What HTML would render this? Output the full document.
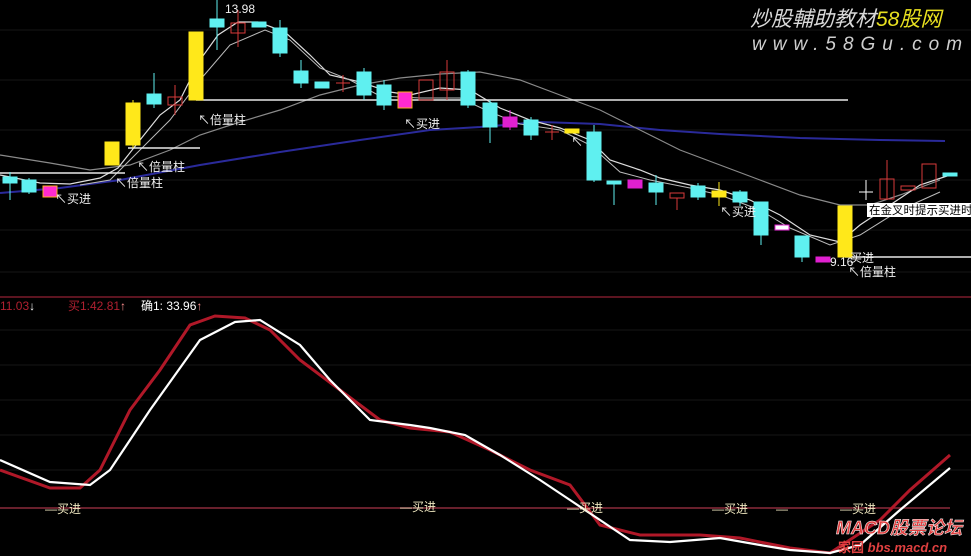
<!DOCTYPE html>
<html><head><meta charset="utf-8"><style>
html,body{margin:0;padding:0;background:#000;width:971px;height:556px;overflow:hidden}
svg{display:block}
text{font-family:"Liberation Sans","Noto Sans CJK SC",sans-serif}
</style></head><body>
<svg width="971" height="556" viewBox="0 0 971 556" xmlns="http://www.w3.org/2000/svg">
<rect width="971" height="556" fill="#000"/>
<g stroke="#0b0b0b" stroke-width="2">
<line x1="0" y1="30" x2="971" y2="30"/><line x1="0" y1="80" x2="971" y2="80"/><line x1="0" y1="130" x2="971" y2="130"/><line x1="0" y1="180" x2="971" y2="180"/><line x1="0" y1="230" x2="971" y2="230"/><line x1="0" y1="272" x2="971" y2="272"/>
<line x1="0" y1="330" x2="971" y2="330"/><line x1="0" y1="365" x2="971" y2="365"/><line x1="0" y1="400" x2="971" y2="400"/><line x1="0" y1="435" x2="971" y2="435"/><line x1="0" y1="470" x2="971" y2="470"/>
</g>
<!-- watermark -->
<text x="750" y="26" font-size="21" font-style="italic" fill="#d8d8d8">炒股輔助教材<tspan fill="#e8e020">58股网</tspan></text>
<text x="752" y="50" font-size="19" font-style="italic" fill="#cfcfcf" letter-spacing="7">www.58Gu.com</text>
<!-- MAs -->
<polyline fill="none" stroke="#2a2a9a" stroke-width="2" points="0,193 60,188 120,180 200,165 280,152 360,140 430,130 480,127 540,122 600,124 660,130 720,134 800,138 880,140 945,141"/>
<polyline fill="none" stroke="#8a8a8a" stroke-width="1.2" points="0,155 50,163 90,170 130,165 170,150 200,135 240,122 280,110 320,95 360,85 400,78 440,74 480,72 520,80 560,95 600,110 640,130 680,150 720,165 760,180 800,195 840,205 870,205 900,195 940,180"/>
<polyline fill="none" stroke="#ddd" stroke-width="1.2" points="0,175 40,183 70,184 100,178 118,168 140,140 160,115 180,100 200,60 218,35 238,22 258,22 285,32 310,55 330,75 360,82 390,92 410,95 440,88 470,90 500,108 530,120 560,128 590,140 610,160 640,170 660,178 690,185 720,190 750,200 780,215 810,235 840,242 860,225 890,205 920,185 950,175"/>
<polyline fill="none" stroke="#bbb" stroke-width="1" points="80,185 110,180 140,150 170,120 200,80 230,45 265,30 290,40 320,68 350,80 380,96 420,98 460,98 490,112 520,124 560,130 590,145 620,172 650,180 690,188 720,195 760,210 790,228 830,245 860,235 900,210 940,192"/>
<!-- horizontal level lines -->
<g stroke="#e8e8e8" stroke-width="1.5">
<line x1="196" y1="100" x2="848" y2="100"/><line x1="128" y1="148" x2="200" y2="148"/><line x1="0" y1="173" x2="125" y2="173"/><line x1="845" y1="257" x2="971" y2="257"/>
</g>
<!-- candles -->
<g stroke-width="1">
<g fill="#5ff0f0" stroke="#5ff0f0">
<line x1="10" y1="172" x2="10" y2="200"/><rect x="3" y="177" width="14" height="6"/>
<line x1="29" y1="178" x2="29" y2="194"/><rect x="22" y="180" width="14" height="12"/>
<line x1="154" y1="73" x2="154" y2="108"/><rect x="147" y="94" width="14" height="10"/>
<line x1="217" y1="0" x2="217" y2="50"/><rect x="210" y="19" width="14" height="8"/>
<rect x="252" y="22" width="14" height="5"/>
<line x1="280" y1="20" x2="280" y2="57"/><rect x="273" y="28" width="14" height="25"/>
<line x1="301" y1="60" x2="301" y2="88"/><rect x="294" y="71" width="14" height="12"/>
<rect x="315" y="82" width="14" height="6"/>
<line x1="364" y1="68" x2="364" y2="100"/><rect x="357" y="72" width="14" height="23"/>
<line x1="384" y1="80" x2="384" y2="110"/><rect x="377" y="85" width="14" height="20"/>
<line x1="468" y1="70" x2="468" y2="108"/><rect x="461" y="72" width="14" height="33"/>
<line x1="490" y1="100" x2="490" y2="143"/><rect x="483" y="103" width="14" height="24"/>
<line x1="531" y1="117" x2="531" y2="140"/><rect x="524" y="120" width="14" height="15"/>
<line x1="594" y1="125" x2="594" y2="182"/><rect x="587" y="132" width="14" height="48"/>
<line x1="614" y1="182" x2="614" y2="205"/><rect x="607" y="181" width="14" height="3"/>
<line x1="656" y1="175" x2="656" y2="205"/><rect x="649" y="183" width="14" height="9"/>
<line x1="698" y1="183" x2="698" y2="200"/><rect x="691" y="186" width="14" height="11"/>
<line x1="740" y1="190" x2="740" y2="206"/><rect x="733" y="192" width="14" height="10"/>
<line x1="761" y1="202" x2="761" y2="245"/><rect x="754" y="202" width="14" height="33"/>
<line x1="802" y1="236" x2="802" y2="262"/><rect x="795" y="236" width="14" height="21"/>
<rect x="943" y="173" width="14" height="3"/>
</g>
<g fill="#ffe81a" stroke="#ffe81a">
<rect x="105" y="142" width="14" height="23"/>
<line x1="133" y1="100" x2="133" y2="148"/><rect x="126" y="103" width="14" height="42"/>
<rect x="189" y="32" width="14" height="68"/>
<rect x="565" y="129" width="14" height="4"/>
<line x1="719" y1="182" x2="719" y2="206"/><rect x="712" y="191" width="14" height="6"/>
<rect x="838" y="206" width="14" height="51"/>
</g>
<g fill="#ff2ad0" stroke="#ffb020">
<rect x="43" y="186" width="14" height="11"/>
<rect x="398" y="92" width="14" height="16"/>
</g>
<g fill="#e020d0" stroke="#e020d0">
<line x1="510" y1="110" x2="510" y2="130"/><rect x="503" y="117" width="14" height="10"/>
<rect x="628" y="180" width="14" height="8"/>
<rect x="775" y="225" width="14" height="5" fill="#fff"/>
<rect x="816" y="257" width="14" height="5"/>
</g>
<g fill="none" stroke="#d83a3a">
<rect x="168" y="97" width="14" height="8"/><line x1="175" y1="85" x2="175" y2="115"/>
<rect x="231" y="23" width="14" height="10"/><line x1="238" y1="10" x2="238" y2="47"/>
<line x1="336" y1="83" x2="350" y2="83"/><line x1="343" y1="75" x2="343" y2="92"/>
<rect x="419" y="80" width="14" height="20"/>
<rect x="440" y="72" width="14" height="18"/><line x1="447" y1="60" x2="447" y2="100"/>
<line x1="545" y1="132" x2="559" y2="132"/><line x1="552" y1="125" x2="552" y2="140"/>
<rect x="670" y="193" width="14" height="5"/><line x1="677" y1="198" x2="677" y2="210"/>
<rect x="880" y="179" width="14" height="20"/><line x1="887" y1="160" x2="887" y2="200"/>
<rect x="901" y="186" width="14" height="4"/>
<rect x="922" y="164" width="14" height="24"/>
</g>
<line x1="859" y1="192" x2="873" y2="192" stroke="#fff"/><line x1="866" y1="180" x2="866" y2="200" stroke="#fff"/>
</g>
<!-- labels -->
<g font-size="12" fill="#f0f0f0">
<text x="225" y="13">13.98</text>
<text x="198" y="124">↖倍量柱</text>
<text x="137" y="171">↖倍量柱</text>
<text x="115" y="187">↖倍量柱</text>
<text x="55" y="203">↖买进</text>
<text x="404" y="128">↖买进</text>
<text x="571" y="146">↖</text>
<text x="720" y="216">↖买进</text>
<text x="830" y="266">9.16</text>
<text x="850" y="262">买进</text>
<text x="848" y="276">↖倍量柱</text>
</g>
<rect x="867" y="203" width="104" height="14" fill="#fff"/>
<text x="869" y="214" font-size="11.5" fill="#000">在金叉时提示买进时</text>
<!-- lower panel -->
<line x1="0" y1="297" x2="971" y2="297" stroke="#7a1a2a" stroke-width="1.5"/>
<text x="0" y="310" font-size="12" fill="#b02030">11.03<tspan fill="#fff">↓</tspan></text>
<text x="68" y="310" font-size="12" fill="#b02030">买1:42.81<tspan fill="#ff9090">↑</tspan></text>
<text x="141" y="310" font-size="12" fill="#fff">确1: 33.96<tspan fill="#ff9090">↑</tspan></text>
<line x1="0" y1="508" x2="950" y2="508" stroke="#8a2a3a" stroke-width="1.5"/>
<polyline fill="none" stroke="#b01828" stroke-width="3" points="0,470 50,488 80,488 100,470 130,410 160,370 190,325 215,316 245,318 270,330 300,360 340,390 380,420 410,428 450,432 490,450 530,470 570,485 600,525 640,535 700,535 740,538 790,548 830,553 880,520 910,490 950,455"/>
<polyline fill="none" stroke="#fff" stroke-width="2.2" points="0,460 50,482 90,485 110,470 150,410 200,340 235,322 260,320 300,345 330,380 370,420 410,425 430,428 465,435 500,455 540,480 570,500 600,520 630,540 670,542 720,538 760,545 790,550 830,553 860,545 900,510 950,468"/>
<g font-size="12" fill="#f0e8c0">
<text x="45" y="513">—买进</text>
<text x="400" y="511">—买进</text>
<text x="567" y="512">—买进</text>
<text x="712" y="513">—买进</text>
<text x="776" y="513">—</text>
<text x="840" y="513">—买进</text>
</g>
<text x="836" y="534" font-size="18" font-weight="bold" font-style="italic" fill="#e04040" stroke="#fff" stroke-width="0.5">MACD股票论坛</text>
<text x="838" y="552" font-size="13" font-weight="bold" fill="#e04040">家园 <tspan font-style="italic">bbs.macd.cn</tspan></text>
</svg>
</body></html>
